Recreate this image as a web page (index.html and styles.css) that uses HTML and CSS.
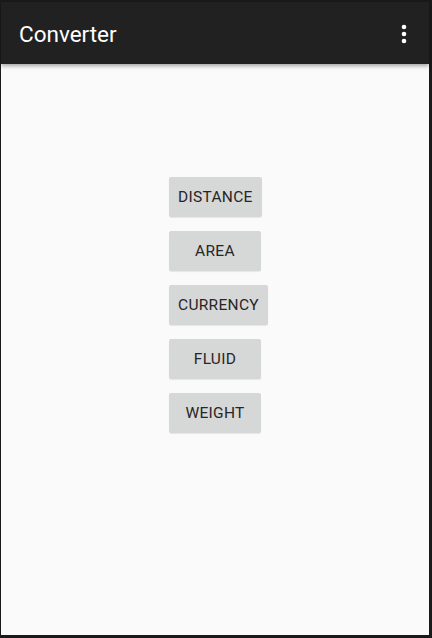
FILE: index.html
```html
<!DOCTYPE html>
<html>
<head>
<meta charset="utf-8">
<link rel="stylesheet" href="styles.css">
</head>
<body>
<div class="frame">
  <div class="screen">
    <header class="appbar">
      <div class="title">Converter</div>
      <div class="overflow" aria-label="More options">
        <svg width="6" height="20" viewBox="0 0 6 20"><circle cx="3" cy="3" r="2.3" fill="#fff"/><circle cx="3" cy="10" r="2.3" fill="#fff"/><circle cx="3" cy="17" r="2.3" fill="#fff"/></svg>
      </div>
    </header>
    <main class="content">
      <div class="buttons">
        <button class="btn">DISTANCE</button>
        <button class="btn">AREA</button>
        <button class="btn">CURRENCY</button>
        <button class="btn">FLUID</button>
        <button class="btn">WEIGHT</button>
      </div>
    </main>
  </div>
</div>
</body>
</html>
```

FILE: styles.css
```css
html, body {
  margin: 0;
  padding: 0;
  background: #111;
}
.frame {
  width: 432px;
  height: 638px;
  box-sizing: border-box;
  padding: 2px 3px 3px 1px;
  background: #1a1a1a;
}
.screen {
  width: 100%;
  height: 100%;
  background: #fafafa;
  display: flex;
  flex-direction: column;
  font-family: Roboto, "Liberation Sans", sans-serif;
}
.appbar {
  height: 62px;
  flex: none;
  background: #212121;
  display: flex;
  align-items: center;
  justify-content: space-between;
  padding: 0 22px 0 18px;
  box-shadow: 0 2px 4px rgba(0,0,0,0.35);
  position: relative;
  z-index: 1;
}
.title {
  color: #fff;
  font-size: 22.5px;
  line-height: 1;
  margin-top: 2px;
}
.overflow {
  display: flex;
  align-items: center;
  margin-top: 1px;
}
.content {
  flex: 1;
  padding-top: 113px;
  padding-left: 168px;
}
.buttons {
  display: flex;
  flex-direction: column;
  align-items: flex-start;
  gap: 14px;
}
.btn {
  min-width: 92px;
  height: 40px;
  padding: 0 9px;
  border: 0;
  border-radius: 2px;
  background: #d6d7d7;
  color: #262626;
  font-family: Roboto, "Liberation Sans", sans-serif;
  font-size: 15.5px;
  letter-spacing: 0.3px;
  box-shadow: 0 1px 1px rgba(0,0,0,0.08);
}
```
